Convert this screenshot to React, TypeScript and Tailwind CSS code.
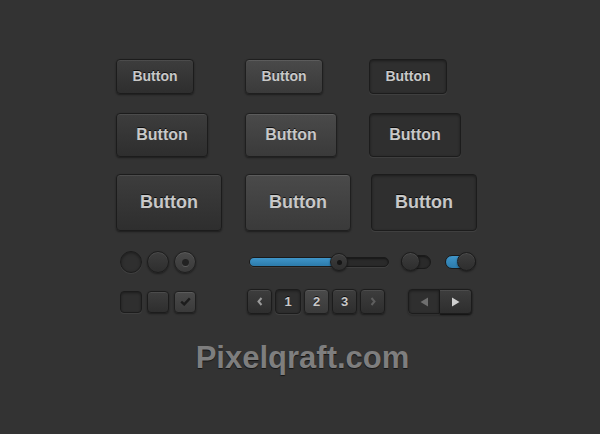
import React from 'react';

const raised =
  'bg-linear-to-b from-[#3d3d3d] to-[#2e2e2e] border border-[#1c1c1c] shadow-[inset_0_1px_0_rgba(255,255,255,0.08),0_1px_2px_rgba(0,0,0,0.45)]';
const light =
  'bg-linear-to-b from-[#4a4a4a] to-[#3a3a3a] border border-[#1f1f1f] shadow-[inset_0_1px_0_rgba(255,255,255,0.1),0_1px_2px_rgba(0,0,0,0.45)]';
const sunken =
  'bg-[#2f2f2f] border border-[#1c1c1c] shadow-[inset_0_1px_3px_rgba(0,0,0,0.4),0_1px_0_rgba(255,255,255,0.06)]';

const label = "font-['Liberation_Sans',Arial,sans-serif] font-bold text-[#c8c8c8] [text-shadow:0_-1px_0_rgba(0,0,0,0.75)]";

const Btn: React.FC<{ look: string; size: string; text: string; extra?: string }> = ({ look, size, text, extra = '' }) => (
  <div className={`${look} ${size} ${extra} rounded-[4px] flex items-center justify-center ${label}`}>{text}</div>
);

const rows = [
  { size: 'w-[78px] h-[35px] text-[14px]', gap: 'mt-0', shift: '' },
  { size: 'w-[92px] h-[44px] text-[16px]', gap: 'mt-[19px]', shift: '' },
  { size: 'w-[106px] h-[57px] text-[18px]', gap: 'mt-[17px]', shift: 'ml-[2px]' },
];

const Chevron: React.FC<{ dir: 'l' | 'r'; color: string }> = ({ dir, color }) => (
  <svg width="6" height="9" viewBox="0 0 6 9">
    <path d={dir === 'l' ? 'M4.5 1 L1.5 4.5 L4.5 8' : 'M1.5 1 L4.5 4.5 L1.5 8'} fill="none" stroke={color} strokeWidth="2" />
  </svg>
);

const App: React.FC = () => {
  return (
    <div className="w-[600px] h-[434px] bg-[#333333] pt-[59px] flex flex-col">
      <div className="flex flex-col ml-[116px]">
        {rows.map(r => (
          <div key={r.size} className={`grid grid-cols-[129px_124px_auto] items-start ${r.gap}`}>
            <Btn look={raised} size={r.size} text="Button" />
            <Btn look={light} size={r.size} text="Button" />
            <Btn look={sunken} size={r.size} text="Button" extra={r.shift} />
          </div>
        ))}
      </div>

      {/* radios, slider, toggles */}
      <div className="flex items-center ml-[120px] mt-[20px] h-[22px]">
        <div className="flex gap-[5px]">
          <div className={`w-[22px] h-[22px] rounded-full ${sunken}`} />
          <div className={`w-[22px] h-[22px] rounded-full ${raised}`} />
          <div className={`w-[22px] h-[22px] rounded-full ${light} flex items-center justify-center`}>
            <div className="w-[7px] h-[7px] rounded-full bg-[#222] shadow-[0_1px_0_rgba(255,255,255,0.15)]" />
          </div>
        </div>

        <div className="relative ml-[53px] w-[140px] h-[10px] rounded-full bg-[#2a2a2a] border border-[#1a1a1a] shadow-[inset_0_1px_2px_rgba(0,0,0,0.5),0_1px_0_rgba(255,255,255,0.06)]">
          <div className="h-full w-[90px] rounded-full bg-linear-to-b from-[#3f95c9] to-[#2c7bab]" />
          <div className={`absolute left-[80px] top-[-5px] w-[18px] h-[18px] rounded-full ${raised} flex items-center justify-center`}>
            <div className="w-[5px] h-[5px] rounded-full bg-[#151515]" />
          </div>
        </div>

        <div className="relative ml-[12px] w-[30px] h-[14px] rounded-full bg-[#2a2a2a] border border-[#1a1a1a] shadow-[inset_0_1px_2px_rgba(0,0,0,0.5)]">
          <div className={`absolute left-[-1px] top-[-4px] w-[19px] h-[19px] rounded-full ${raised}`} />
        </div>

        <div className="relative ml-[14px] w-[31px] h-[14px] rounded-full bg-linear-to-b from-[#3f95c9] to-[#2c7bab] border border-[#1a1a1a]">
          <div className={`absolute right-[-1px] top-[-4px] w-[19px] h-[19px] rounded-full ${raised}`} />
        </div>
      </div>

      {/* checkboxes, pagination, arrows */}
      <div className="flex items-center ml-[120px] mt-[16px] h-[25px]">
        <div className="flex gap-[5px]">
          <div className={`w-[22px] h-[22px] rounded-[4px] ${sunken}`} />
          <div className={`w-[22px] h-[22px] rounded-[4px] ${raised}`} />
          <div className={`w-[22px] h-[22px] rounded-[4px] ${light} flex items-center justify-center`}>
            <svg width="11" height="9" viewBox="0 0 11 9">
              <path d="M1.2 4.6 L4.2 7.4 L9.8 1.4" fill="none" stroke="#1c1c1c" strokeWidth="2.4" />
            </svg>
          </div>
        </div>

        <div className={`flex gap-[3px] ml-[51px] ${label} text-[13px]`}>
          <div className={`w-[25px] h-[25px] rounded-[4px] ${raised} flex items-center justify-center`}>
            <Chevron dir="l" color="#9a9a9a" />
          </div>
          <div className={`w-[26px] h-[25px] rounded-[4px] ${sunken} flex items-center justify-center`}>1</div>
          <div className={`w-[25px] h-[25px] rounded-[4px] ${light} flex items-center justify-center`}>2</div>
          <div className={`w-[25px] h-[25px] rounded-[4px] ${raised} flex items-center justify-center`}>3</div>
          <div className={`w-[25px] h-[25px] rounded-[4px] ${raised} flex items-center justify-center`}>
            <Chevron dir="r" color="#5e5e5e" />
          </div>
        </div>

        <div className="flex ml-[23px] h-[25px] rounded-[4px] shadow-[0_1px_2px_rgba(0,0,0,0.45)]">
          <div className={`w-[32px] h-full rounded-l-[4px] ${sunken} flex items-center justify-center`}>
            <svg width="9" height="10" viewBox="0 0 9 10">
              <path d="M8 0.5 L8 9.5 L0.5 5 Z" fill="#6f6f6f" />
            </svg>
          </div>
          <div className={`w-[32px] h-full rounded-r-[4px] border-l-0 ${raised} flex items-center justify-center`}>
            <svg width="9" height="10" viewBox="0 0 9 10">
              <path d="M1 0.5 L1 9.5 L8.5 5 Z" fill="#cfcfcf" />
            </svg>
          </div>
        </div>
      </div>

      <div className="mt-[28px] ml-[5px] text-center font-['Liberation_Sans',Arial,sans-serif] font-bold text-[31px] leading-none text-[#7e7e7e] [text-shadow:0_1px_1px_rgba(0,0,0,0.6)]">
        Pixelqraft.com
      </div>
    </div>
  );
};

export default App;
